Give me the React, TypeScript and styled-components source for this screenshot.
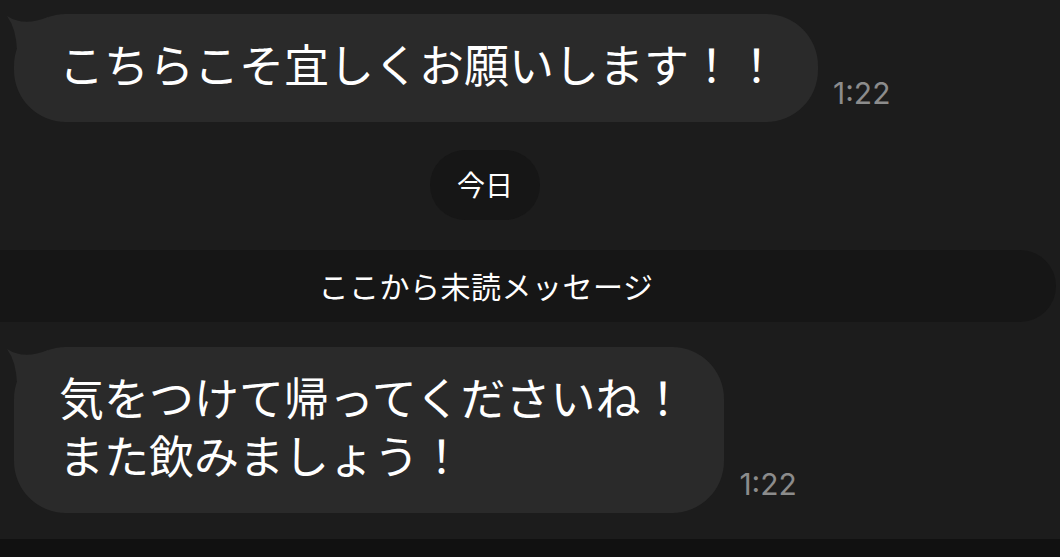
import React from 'react';
import styled, { createGlobalStyle } from 'styled-components';

const GlobalStyle = createGlobalStyle`
  html, body {
    margin: 0;
    padding: 0;
    background: #1c1c1c;
  }
  body {
    font-family: "Noto Sans CJK JP", "Noto Sans", sans-serif;
    color: #ffffff;
  }
`;

const Screen = styled.div`
  width: 1060px;
  height: 557px;
  overflow: hidden;
  display: flex;
  flex-direction: column;
  background: #1c1c1c;
`;

const Thread = styled.div`
  flex: 1;
  display: flex;
  flex-direction: column;
  padding-top: 14px;
`;

const MessageRow = styled.div<{ gap?: number }>`
  display: flex;
  align-items: flex-end;
  padding-left: 14px;
  margin-top: ${props => props.gap || 0}px;
`;

const Bubble = styled.div`
  position: relative;
  background: #2a2a2a;
  border-radius: 52px;
  padding: 21px 39px 29px 45px;
  font-size: 45px;
  line-height: 58px;
  white-space: pre;
`;

const Tail = styled.svg`
  position: absolute;
  left: -8px;
  top: 0;
  width: 44px;
  height: 36px;
`;

const Time = styled.span`
  font-family: Inter, "Liberation Sans", sans-serif;
  font-size: 30px;
  line-height: 30px;
  color: #8c8c8c;
  margin-left: 15px;
  margin-bottom: 14px;
`;

const DateRow = styled.div`
  display: flex;
  justify-content: center;
  padding-right: 90px;
  margin-top: 28px;
`;

const DatePill = styled.div`
  width: 110px;
  height: 70px;
  border-radius: 35px;
  background: #161616;
  display: flex;
  align-items: center;
  justify-content: center;
  font-size: 28px;
  padding-bottom: 2px;
  box-sizing: border-box;
`;

const UnreadBar = styled.div`
  margin-top: 30px;
  margin-right: 4px;
  height: 72px;
  border-radius: 0 36px 36px 0;
  background: #161616;
  display: flex;
  align-items: center;
  justify-content: center;
  padding-right: 84px;
  padding-bottom: 2px;
  box-sizing: border-box;
  font-size: 30px;
  letter-spacing: 0.5px;
`;

const BottomBar = styled.div`
  height: 18px;
  background: #111111;
`;

const BubbleTail = () => (
  <Tail viewBox="-8 0 44 36">
    <path d="M -7 2 Q 10 13 34 3 L 34 36 L 3 36 Q 2 14 -7 2 Z" fill="#2a2a2a" />
  </Tail>
);

const App: React.FC = () => (
  <Screen>
    <GlobalStyle />
    <Thread>
      <MessageRow>
        <Bubble>
          <BubbleTail />
          こちらこそ宜しくお願いします！！
        </Bubble>
        <Time>1:22</Time>
      </MessageRow>

      <DateRow>
        <DatePill>今日</DatePill>
      </DateRow>

      <UnreadBar>ここから未読メッセージ</UnreadBar>

      <MessageRow gap={25}>
        <Bubble>
          <BubbleTail />
          {'気をつけて帰ってくださいね！\nまた飲みましょう！'}
        </Bubble>
        <Time>1:22</Time>
      </MessageRow>
    </Thread>
    <BottomBar />
  </Screen>
);

export default App;
